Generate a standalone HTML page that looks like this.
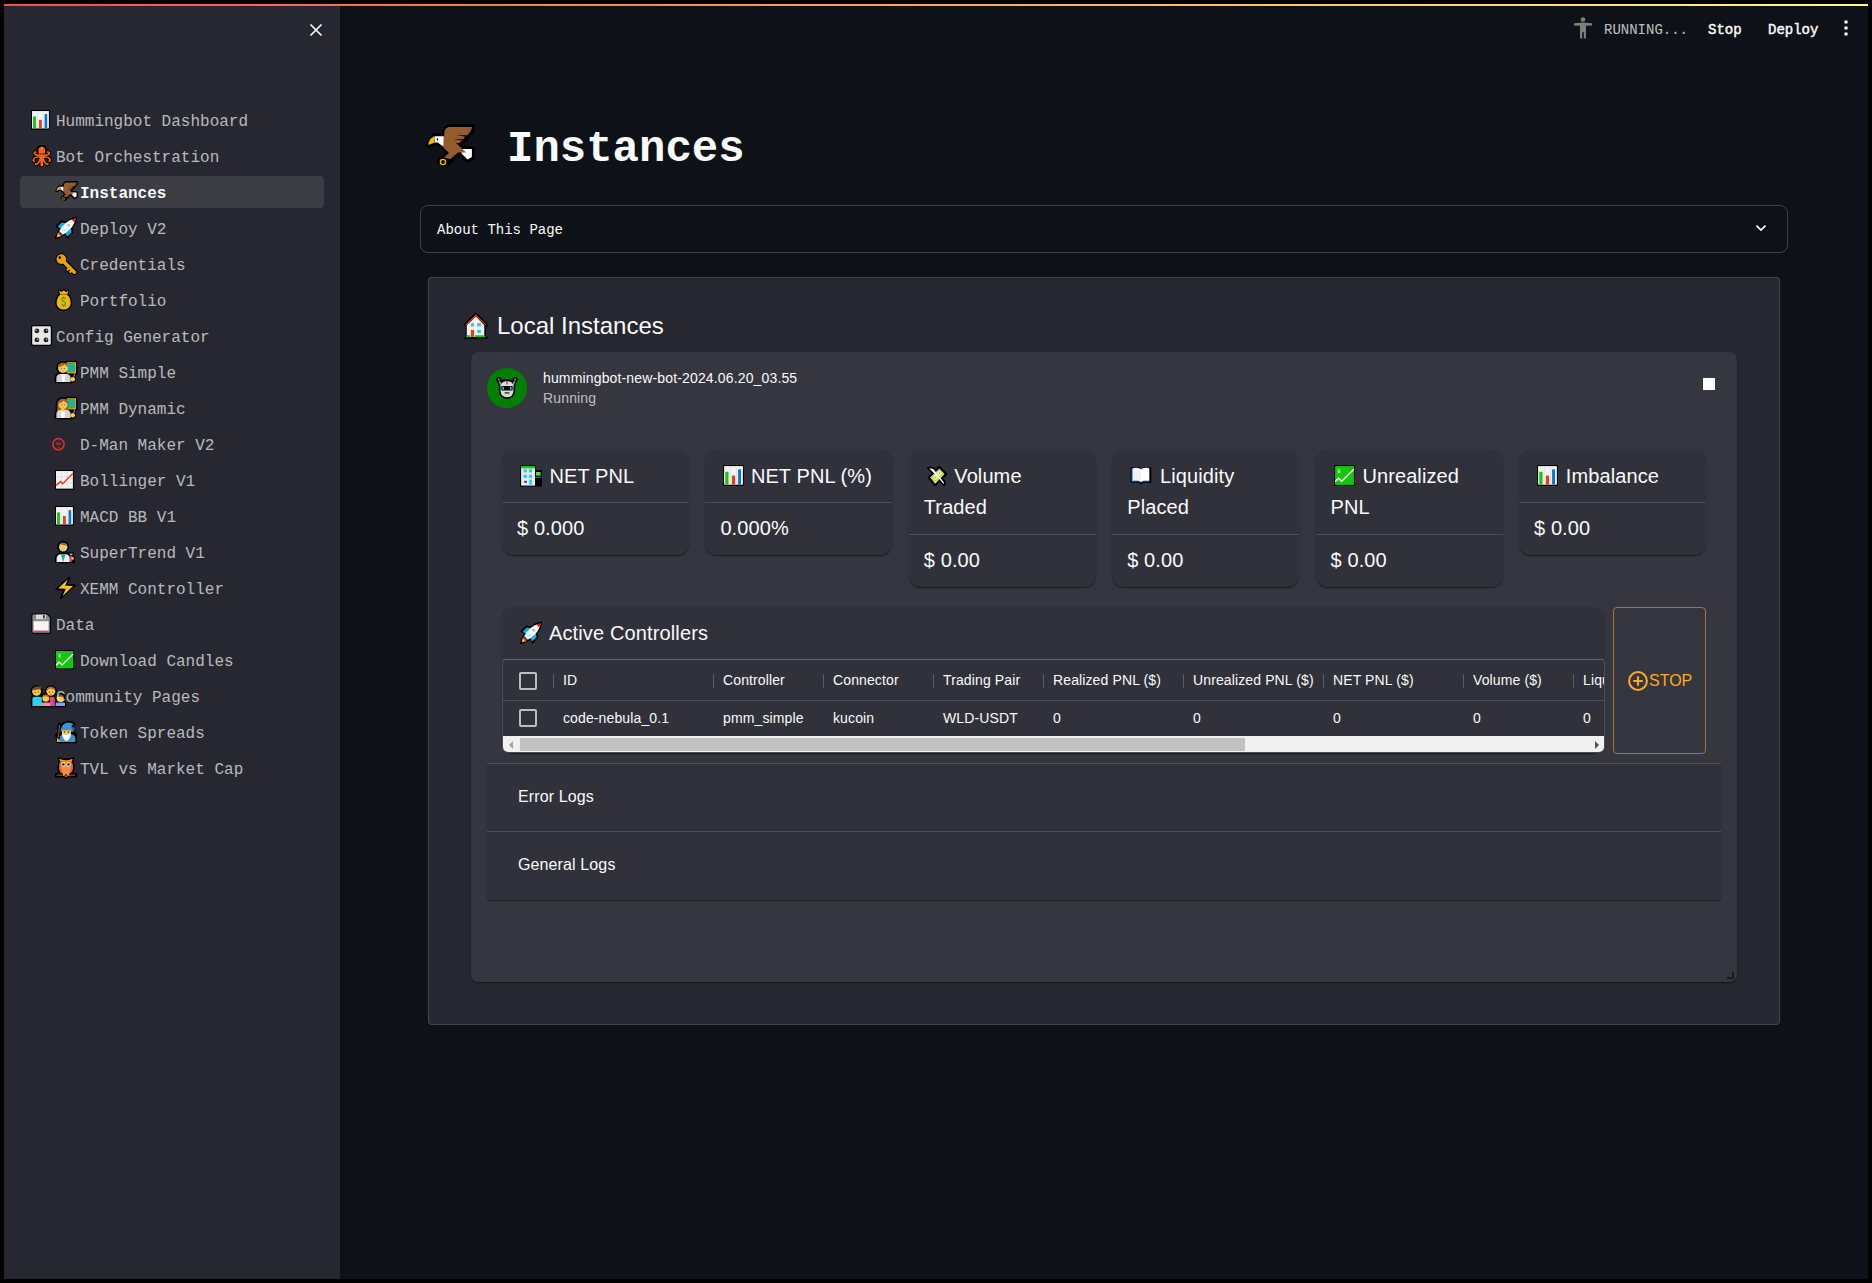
<!DOCTYPE html>
<html><head><meta charset="utf-8">
<style>
*{box-sizing:border-box;margin:0;padding:0}
html,body{width:1872px;height:1283px;background:#000;overflow:hidden}
body{position:relative;font-family:"Liberation Sans",sans-serif;color:#fafafa}
.abs{position:absolute}
.mono{font-family:"Liberation Mono",monospace}
.t{position:absolute;white-space:nowrap}
</style></head><body>

<div class="abs" style="left:4px;top:4px;width:1864px;height:1275px;background:#0e1117"></div>
<div class="abs" style="left:4px;top:6px;width:336px;height:1273px;background:#262730"></div>
<div class="abs" style="left:4px;top:4px;width:1864px;height:2px;background:linear-gradient(90deg,#ff4b4b,#fffd80)"></div>
<svg class="abs" style="left:309px;top:23px" width="14" height="14" viewBox="0 0 14 14"><path d="M1.5 1.5L12.5 12.5M12.5 1.5L1.5 12.5" stroke="#fafafa" stroke-width="1.7"/></svg>
<div class="abs" style="left:20px;top:176px;width:304px;height:32px;border-radius:4px;background:rgba(250,250,250,0.1)"></div>
<svg class="abs" style="left:31px;top:109.5px;overflow:visible" width="19.8" height="20.6" viewBox="0 0 22 22" preserveAspectRatio="none"><rect x="0" y="0" width="21" height="21" rx="1" fill="#000"/><rect x="1.1" y="1.1" width="18.8" height="18.6" fill="#f2f2f2"/><path d="M7.3 1.1v18.6M13.6 1.1v18.6" stroke="#dcdcdc" stroke-width="0.6"/><rect x="2.3" y="6.8" width="3.2" height="12.9" rx="0.8" fill="#16c60c"/><rect x="8.9" y="10.6" width="3.1" height="9.1" fill="#f03a17"/><rect x="15.1" y="4.2" width="2.9" height="15.5" rx="0.8" fill="#0078d7"/></svg>
<div class="t mono" style="left:56px;top:106px;height:32px;line-height:32px;font-size:16px;color:rgba(250,250,250,0.7);font-weight:normal">Hummingbot Dashboard</div>
<svg class="abs" style="left:31px;top:145px;overflow:visible" width="22" height="22" viewBox="0 0 22 22" preserveAspectRatio="none"><g fill="none" stroke="#000" stroke-width="3.4" stroke-linecap="round"><path d="M8.6 10C6 10.6 3.8 10.2 3.3 8.6C3 7.5 3.8 6.7 4.7 7.1M12.9 10C15.5 10.6 17.7 10.2 18.2 8.6C18.5 7.5 17.7 6.7 16.8 7.1M9 11.8C6 11.8 3.2 12.4 2.3 14.8C2 15.9 2.8 16.6 3.5 16.1M12.5 11.8C15.5 11.8 18.3 12.4 19.2 14.8C19.5 15.9 18.7 16.6 18 16.1M9.6 12.8C8.8 15.8 7.6 18.4 5.6 19.4C4.9 19.8 4.3 19.3 4.6 18.7M11.9 12.8C12.7 15.8 13.9 18.4 15.9 19.4C16.6 19.8 17.2 19.3 16.9 18.7M10.2 13V20.4M11.3 13V20.4"/></g><path d="M6.6 5C6.6 2.4 8.4 0.9 10.75 0.9C13.1 0.9 14.9 2.4 14.9 5C14.9 7.6 14 9.4 13.4 11.2V13.4H8.1V11.2C7.5 9.4 6.6 7.6 6.6 5Z" fill="#000" stroke="#000" stroke-width="1.8" stroke-linejoin="round"/><g fill="none" stroke="#f7630c" stroke-width="1.6" stroke-linecap="round"><path d="M8.6 10C6 10.6 3.8 10.2 3.3 8.6C3 7.5 3.8 6.7 4.7 7.1M12.9 10C15.5 10.6 17.7 10.2 18.2 8.6C18.5 7.5 17.7 6.7 16.8 7.1M9 11.8C6 11.8 3.2 12.4 2.3 14.8C2 15.9 2.8 16.6 3.5 16.1M12.5 11.8C15.5 11.8 18.3 12.4 19.2 14.8C19.5 15.9 18.7 16.6 18 16.1M9.6 12.8C8.8 15.8 7.6 18.4 5.6 19.4C4.9 19.8 4.3 19.3 4.6 18.7M11.9 12.8C12.7 15.8 13.9 18.4 15.9 19.4C16.6 19.8 17.2 19.3 16.9 18.7M10.2 13V20.4M11.3 13V20.4"/></g><path d="M7.4 5C7.4 2.9 8.8 1.7 10.75 1.7C12.7 1.7 14.1 2.9 14.1 5C14.1 7.4 13.3 9.2 12.8 11V13H8.7V11C8.2 9.2 7.4 7.4 7.4 5Z" fill="#f7630c"/><circle cx="9.4" cy="8.9" r="0.7" fill="#000"/><circle cx="12.1" cy="8.9" r="0.7" fill="#000"/><circle cx="11.6" cy="3.2" r="0.55" fill="#ffb37a"/><circle cx="10.3" cy="4.4" r="0.4" fill="#ffb37a"/></svg>
<div class="t mono" style="left:56px;top:142px;height:32px;line-height:32px;font-size:16px;color:rgba(250,250,250,0.7);font-weight:normal">Bot Orchestration</div>
<svg class="abs" style="left:55px;top:181px;overflow:visible" width="23" height="21" viewBox="0 0 50 45" preserveAspectRatio="none"><g fill="#000" stroke="#000" stroke-width="6" stroke-linejoin="round" stroke-linecap="round"><path d="M3.6 21L9.7 12H19.3C19.5 6 22 3 26.5 3H47.2C46.5 7 44.6 9.4 42 11.3C41 14 39.5 15.6 37 16.8C36.4 18 35.3 18.8 33.5 19.4L36.6 24.9H46.9V33L42.6 35.6L36.5 29.8L33 28.5L25.5 35.5L22 39.5H18L15 37L19 33.5L24 29L18.8 22.9L12.7 18.4L9.7 18.4Z"/></g><path d="M36.5 24.9H46.9V33L42.6 35.6L36.5 29.5Z" fill="#fff"/><path d="M9.7 12.2H18.8V22.9L12.7 18.4H9.7Z" fill="#fff"/><path d="M9.7 12.2C6 13.3 3.6 16.5 3.4 21L9.7 18.4Z" fill="#f4b400"/><rect x="11.8" y="14.4" width="1.3" height="2" fill="#000"/><path d="M19.3 9.2C19.3 5.4 21.6 3 25.4 3H47.2C46.6 6.2 45 8.6 42.2 11.3H31.5L40 12.5C39.4 14.2 38.6 15 37.2 15.3H28.4L37 16.6C36.2 18 35.4 18.7 33.8 18.9H31L41.1 28.5H33L25.5 35L19 33.5L24 29L18.3 23.4Z" fill="#955a2d"/><circle cx="18" cy="38" r="2.6" fill="none" stroke="#f4b400" stroke-width="1.4"/></svg>
<div class="t mono" style="left:80px;top:178px;height:32px;line-height:32px;font-size:16px;color:#fafafa;font-weight:bold">Instances</div>
<svg class="abs" style="left:55px;top:217px;overflow:visible" width="22" height="22" viewBox="0 0 22 22" preserveAspectRatio="none"><g stroke="#000" stroke-width="2" stroke-linejoin="round"><path d="M21.2 0.8C17 1.3 14 3 11.6 5.4L6.8 4.6L1.6 9.5L5.6 11L4.4 13.2L2 17.5L0.8 21.2L4.5 20L8.8 17.6L11 16.4L12.6 20.4L17.4 15.2L16.6 10.4C19 8 20.7 5 21.2 0.8Z" fill="#000"/></g><path d="M2.6 9.8L6.8 5.5L11.2 6.2L7 12.2Z" fill="#00b4f0"/><path d="M12.2 19.4L16.5 15.2L15.8 10.8L9.8 15Z" fill="#00b4f0"/><path d="M4.2 14.2L7.8 17.8L11.4 15.6L15.2 12C18.2 9 20 5 20.6 1.4C17 2 13 3.8 10 6.8L6.4 10.6Z" fill="#fff"/><path d="M16.2 2.3C18 1.7 19.5 1.4 20.6 1.4C20.4 2.6 20.1 4 19.7 5.8Z" fill="#e81123"/><path d="M4.2 14.2L7.8 17.8L6.2 19.2L2.8 15.8Z" fill="#454f56"/><path d="M2.8 15.8L6.2 19.2L1.5 20.6Z" fill="#ff8c1a"/><circle cx="3.6" cy="18.2" r="1" fill="#ffd23a"/><circle cx="13.8" cy="8.2" r="1.6" fill="#bdbdbd"/><path d="M8 14.4L10.2 12.2" stroke="#35b8ef" stroke-width="0.9"/></svg>
<div class="t mono" style="left:80px;top:214px;height:32px;line-height:32px;font-size:16px;color:rgba(250,250,250,0.7);font-weight:normal">Deploy V2</div>
<svg class="abs" style="left:55px;top:253px;overflow:visible" width="22" height="22" viewBox="0 0 22 22" preserveAspectRatio="none"><path d="M8 8L19.4 19.2" stroke="#000" stroke-width="6" stroke-linecap="round"/><circle cx="6.3" cy="6.1" r="5.9" fill="#000"/><path d="M13.6 15.6L12.2 17M16.2 18L14.9 19.3" stroke="#000" stroke-width="4.4" stroke-linecap="round"/><circle cx="6.3" cy="6.1" r="4.8" fill="#e8a400"/><path d="M8 8L19.4 19.2" stroke="#e8a400" stroke-width="3.6" stroke-linecap="round"/><path d="M13.6 15.6L12.6 16.6M16.2 18L15.3 18.9" stroke="#e8a400" stroke-width="2.2" stroke-linecap="round"/><circle cx="4.8" cy="4.6" r="1.3" fill="#000"/></svg>
<div class="t mono" style="left:80px;top:250px;height:32px;line-height:32px;font-size:16px;color:rgba(250,250,250,0.7);font-weight:normal">Credentials</div>
<svg class="abs" style="left:54.5px;top:289px;overflow:visible" width="18.5" height="22" viewBox="0 0 22 22" preserveAspectRatio="none"><g fill="#000" stroke="#000" stroke-width="2" stroke-linejoin="round"><path d="M4.8 0.8L7.5 2.4L10.5 0.8L13.2 2.4L15.8 0.8L14.8 5.2C18 7.2 19.3 10.3 19.3 13.7C19.3 18.6 15.5 21.2 10.3 21.2C5.1 21.2 1.3 18.6 1.3 13.7C1.3 10.3 2.6 7.2 5.8 5.2Z"/></g><path d="M5 1.6L7.5 3L10.3 1.6L13.1 3L15.6 1.6L14.6 5.2H6Z" fill="#f4b400"/><rect x="6" y="4.8" width="8.6" height="1.1" fill="#b06a20"/><path d="M6 5.9H14.6C17.4 7.7 18.6 10.5 18.6 13.7C18.6 18 15.2 20.5 10.3 20.5C5.4 20.5 2 18 2 13.7C2 10.5 3.2 7.7 6 5.9Z" fill="#f4b400"/><path d="M12.4 10.2C12 9.2 11.2 8.8 10.3 8.8C9 8.8 8.2 9.6 8.2 10.6C8.2 12.8 12.6 12.2 12.6 14.6C12.6 15.7 11.6 16.5 10.3 16.5C9.2 16.5 8.3 15.9 8 14.9M10.3 7.3V8.8M10.3 16.5V18" stroke="#16a60c" stroke-width="1.3" fill="none"/></svg>
<div class="t mono" style="left:80px;top:286px;height:32px;line-height:32px;font-size:16px;color:rgba(250,250,250,0.7);font-weight:normal">Portfolio</div>
<svg class="abs" style="left:31px;top:325px;overflow:visible" width="22" height="22" viewBox="0 0 22 22" preserveAspectRatio="none"><rect x="0" y="0" width="21" height="21" rx="2.2" fill="#000"/><rect x="1.2" y="1.2" width="18.6" height="18.6" rx="1.2" fill="#e8e8e8"/><g fill="#222"><circle cx="5.9" cy="5.9" r="2.4"/><circle cx="15" cy="5.9" r="2.4"/><circle cx="5.9" cy="14.9" r="2.4"/><circle cx="15" cy="14.9" r="2.4"/></g><g fill="#ddd"><circle cx="5.2" cy="5.2" r="0.7"/><circle cx="15.7" cy="5.2" r="0.7"/><circle cx="6.6" cy="14.2" r="0.7"/><circle cx="15.7" cy="14.2" r="0.7"/></g></svg>
<div class="t mono" style="left:56px;top:322px;height:32px;line-height:32px;font-size:16px;color:rgba(250,250,250,0.7);font-weight:normal">Config Generator</div>
<svg class="abs" style="left:55px;top:361px;overflow:visible" width="22" height="22" viewBox="0 0 22 22" preserveAspectRatio="none"><g fill="#000" stroke="#000" stroke-width="1.8" stroke-linejoin="round"><rect x="11" y="0.6" width="10.6" height="12.4"/><circle cx="8" cy="6.9" r="5.9"/><path d="M0.6 21.3V17C0.6 14 2.8 12.2 5.6 12.2H11.6C13.8 12.2 15.6 13.2 16.2 14.6H17.8C19.8 14.8 20.6 16.4 20.4 18C20.2 20 18.8 21.3 16.8 21.3Z"/></g><rect x="11.6" y="1.2" width="9.4" height="11.2" fill="#e8a400"/><rect x="12.2" y="1.8" width="7.8" height="9.4" fill="#18b49a"/><path d="M19.4 12.4L18.9 16" stroke="#bbb" stroke-width="0.8"/><path d="M1.4 21V17C1.4 14.6 3.2 13 5.6 13H11.4C13.8 13 15.6 14.6 15.6 17V21Z" fill="#d4d4d4"/><path d="M6.4 13H10.6L9.9 21H7.1Z" fill="#fff"/><circle cx="8" cy="6.9" r="5" fill="#ffc83d"/><path d="M3 6.4C2.9 3.6 5 1.8 8 1.8C11 1.8 13.1 3.6 13 6.6C12 5.8 11 4.6 10.2 3.6C8.6 4.8 5.6 5.8 3 6.4Z" fill="#a0632c"/><circle cx="6.2" cy="7.8" r="1" fill="#8fd0f5"/><circle cx="9.8" cy="7.8" r="1" fill="#8fd0f5"/><circle cx="6.2" cy="7.3" r="0.45" fill="#222"/><circle cx="9.8" cy="7.3" r="0.45" fill="#222"/><rect x="7.2" y="9.9" width="1.6" height="0.7" fill="#e8906a"/><circle cx="17.8" cy="18.2" r="2.3" fill="#ffc83d"/></svg>
<div class="t mono" style="left:80px;top:358px;height:32px;line-height:32px;font-size:16px;color:rgba(250,250,250,0.7);font-weight:normal">PMM Simple</div>
<svg class="abs" style="left:55px;top:397px;overflow:visible" width="22" height="22" viewBox="0 0 22 22" preserveAspectRatio="none"><g fill="#000" stroke="#000" stroke-width="1.8" stroke-linejoin="round"><rect x="11" y="0.6" width="10.6" height="12.4"/><path d="M1.6 15.5V7C1.6 3.2 4.4 0.9 8 0.9C11.6 0.9 14.4 3.2 14.4 7V15.5Z"/><path d="M0.6 21.3V17C0.6 14 2.8 12.2 5.6 12.2H11.6C13.8 12.2 15.6 13.2 16.2 14.6H17.8C19.8 14.8 20.6 16.4 20.4 18C20.2 20 18.8 21.3 16.8 21.3Z"/></g><rect x="11.6" y="1.2" width="9.4" height="11.2" fill="#e8a400"/><rect x="12.2" y="1.8" width="7.8" height="9.4" fill="#18b49a"/><path d="M19.4 12.4L18.9 16" stroke="#bbb" stroke-width="0.8"/><path d="M2.4 15V7C2.4 3.8 4.8 1.7 8 1.7C11.2 1.7 13.6 3.8 13.6 7V15Z" fill="#a0632c"/><path d="M1.4 21V17C1.4 14.6 3.2 13 5.6 13H11.4C13.8 13 15.6 14.6 15.6 17V21Z" fill="#d4d4d4"/><path d="M6.2 13H9.8L9.6 21H6.4Z" fill="#fff"/><rect x="6.4" y="11.6" width="3.2" height="3" fill="#ffc83d"/><circle cx="8" cy="7.6" r="4.4" fill="#ffc83d"/><path d="M3.6 6.6C5.4 6.2 7.6 4.8 8.8 3.4C9.6 4.8 11 5.8 12.4 6.2C12.2 3.8 10.4 2.4 8 2.4C5.6 2.4 3.8 4 3.6 6.6Z" fill="#a0632c"/><circle cx="6.3" cy="8.2" r="1" fill="#8fd0f5"/><circle cx="9.7" cy="8.2" r="1" fill="#8fd0f5"/><circle cx="6.3" cy="7.7" r="0.45" fill="#222"/><circle cx="9.7" cy="7.7" r="0.45" fill="#222"/><rect x="7.2" y="10.2" width="1.6" height="0.7" fill="#e8906a"/><circle cx="17.8" cy="18.2" r="2.3" fill="#ffc83d"/></svg>
<div class="t mono" style="left:80px;top:394px;height:32px;line-height:32px;font-size:16px;color:rgba(250,250,250,0.7);font-weight:normal">PMM Dynamic</div>
<svg class="abs" style="left:52px;top:438px;overflow:visible" width="22" height="22" viewBox="0 0 22 22" preserveAspectRatio="none"><circle cx="6.5" cy="6.2" r="5.6" fill="none" stroke="#e62a2a" stroke-width="1.6"/><path d="M3.8 5.6L5.2 4.2L6.2 5.8M7 5.8L8 4.2L9.3 5.6M4.2 6.2L9 6.2M5.8 9.2H7.3" stroke="#e62a2a" stroke-width="0.9" fill="none"/></svg>
<div class="t mono" style="left:80px;top:430px;height:32px;line-height:32px;font-size:16px;color:rgba(250,250,250,0.7);font-weight:normal">D-Man Maker V2</div>
<svg class="abs" style="left:55px;top:469.8px;overflow:visible" width="19.8" height="20.6" viewBox="0 0 22 22" preserveAspectRatio="none"><rect x="0" y="0" width="21" height="21" rx="1" fill="#000"/><rect x="1.1" y="1.1" width="18.8" height="18.8" fill="#f2f2f2"/><path d="M7.3 1.1v18.8M13.6 1.1v18.8M1.1 7.3h18.8M1.1 13.6h18.8" stroke="#d6d6d6" stroke-width="0.6"/><path d="M1.2 16.5L6.3 12.4L8.6 14.6L19.8 3.8" stroke="#f03a17" stroke-width="1.6" fill="none"/></svg>
<div class="t mono" style="left:80px;top:466px;height:32px;line-height:32px;font-size:16px;color:rgba(250,250,250,0.7);font-weight:normal">Bollinger V1</div>
<svg class="abs" style="left:55px;top:505.5px;overflow:visible" width="19.8" height="20.6" viewBox="0 0 22 22" preserveAspectRatio="none"><rect x="0" y="0" width="21" height="21" rx="1" fill="#000"/><rect x="1.1" y="1.1" width="18.8" height="18.6" fill="#f2f2f2"/><path d="M7.3 1.1v18.6M13.6 1.1v18.6" stroke="#dcdcdc" stroke-width="0.6"/><rect x="2.3" y="6.8" width="3.2" height="12.9" rx="0.8" fill="#16c60c"/><rect x="8.9" y="10.6" width="3.1" height="9.1" fill="#f03a17"/><rect x="15.1" y="4.2" width="2.9" height="15.5" rx="0.8" fill="#0078d7"/></svg>
<div class="t mono" style="left:80px;top:502px;height:32px;line-height:32px;font-size:16px;color:rgba(250,250,250,0.7);font-weight:normal">MACD BB V1</div>
<svg class="abs" style="left:55px;top:541px;overflow:visible" width="22" height="22" viewBox="0 0 22 22" preserveAspectRatio="none"><g fill="#000" stroke="#000" stroke-width="2" stroke-linejoin="round"><circle cx="8.2" cy="5.8" r="5"/><path d="M0.8 21.2V17.5C0.8 14.5 3 12.6 6 12.6H10.5C12.5 12.6 14 13.4 14.6 14.4V12.2H17.4V15C18.2 15.6 18.8 16.5 18.8 17.6V21.2Z"/></g><path d="M1.6 21V17.5C1.6 15 3.4 13.3 6 13.3H10.4C13 13.3 14.8 15 14.8 17.5V21Z" fill="#eee"/><path d="M5.8 13.3H10.6L8.2 21Z" fill="#18b49a"/><circle cx="8.2" cy="6.2" r="4.2" fill="#ffc83d"/><path d="M3.9 5.4C4 2.8 5.8 1.4 8.2 1.4C10.6 1.4 12.4 2.8 12.5 5.2L11.5 4.2C10 4.4 7.2 4 5.5 3Z" fill="#a0632c"/><rect x="4.9" y="5.9" width="2.9" height="2.1" rx="0.8" fill="#9dd6f5"/><rect x="8.6" y="5.9" width="2.9" height="2.1" rx="0.8" fill="#9dd6f5"/><circle cx="8.2" cy="9.4" r="0.6" fill="#e8a060"/><rect x="14.9" y="14.5" width="2.4" height="6.2" rx="0.8" fill="#e8306e"/><rect x="14.7" y="12.6" width="2.8" height="1.2" fill="#aee2f5"/><circle cx="17.6" cy="17.4" r="1.3" fill="#ffc83d"/></svg>
<div class="t mono" style="left:80px;top:538px;height:32px;line-height:32px;font-size:16px;color:rgba(250,250,250,0.7);font-weight:normal">SuperTrend V1</div>
<svg class="abs" style="left:55px;top:577px;overflow:visible" width="22" height="22" viewBox="0 0 22 22" preserveAspectRatio="none"><path d="M13.8 0.8L1.2 12.4L9.2 12.6L5.6 21.2L19.8 8L11.6 7.8L14.6 0.8Z" fill="#000" stroke="#000" stroke-width="1.8" stroke-linejoin="round"/><path d="M12.6 2.6L3.2 11.5L10.8 11.7L7.6 19.2L18 9L10.2 8.8Z" fill="#f7c325"/></svg>
<div class="t mono" style="left:80px;top:574px;height:32px;line-height:32px;font-size:16px;color:rgba(250,250,250,0.7);font-weight:normal">XEMM Controller</div>
<svg class="abs" style="left:31px;top:613px;overflow:visible" width="22" height="22" viewBox="0 0 22 22" preserveAspectRatio="none"><path d="M0.4 2.6C0.4 1.4 1.2 0.6 2.4 0.6H16.4L19.8 4V19C19.8 20 19.1 20.7 18 20.7H2.4C1.2 20.7 0.4 20 0.4 19Z" fill="#000"/><path d="M1.4 2.8C1.4 2 2 1.6 2.6 1.6H16L18.8 4.4V18.8C18.8 19.4 18.4 19.7 17.8 19.7H2.6C2 19.7 1.4 19.4 1.4 18.8Z" fill="#8a8a8a"/><rect x="5" y="1.6" width="10" height="4.6" fill="#d9d9d9"/><rect x="12" y="2.2" width="1.8" height="3.2" fill="#333"/><rect x="2.6" y="8.2" width="15" height="10.4" fill="#f5f5f5"/><rect x="2.6" y="17.6" width="15" height="1.2" fill="#e81d62"/></svg>
<div class="t mono" style="left:56px;top:610px;height:32px;line-height:32px;font-size:16px;color:rgba(250,250,250,0.7);font-weight:normal">Data</div>
<svg class="abs" style="left:55px;top:649.8px;overflow:visible" width="20.2" height="20.2" viewBox="0 0 22 22" preserveAspectRatio="none"><rect x="0" y="0" width="21" height="21" rx="1" fill="#000"/><rect x="1.1" y="1.1" width="18.8" height="18.8" fill="#16c60c"/><path d="M1.2 16.6L4.6 13.2L7.7 16.2L19.8 4.3" stroke="#fff" stroke-width="1.4" fill="none"/><path d="M3.4 3.8L5 5.6L6.6 3.8M5 5.6v2.6M3.7 6.5h2.6M3.7 7.6h2.6" stroke="#b9ecb3" stroke-width="0.9" fill="none"/></svg>
<div class="t mono" style="left:80px;top:646px;height:32px;line-height:32px;font-size:16px;color:rgba(250,250,250,0.7);font-weight:normal">Download Candles</div>
<svg class="abs" style="left:31px;top:685px;overflow:visible" width="34" height="22" viewBox="0 0 34 22" preserveAspectRatio="none"><g fill="#000" stroke="#000" stroke-width="1.7" stroke-linejoin="round"><circle cx="5.6" cy="6.2" r="5.2"/><circle cx="19.9" cy="6.2" r="5.2"/><path d="M0.6 21.4V14C0.6 12 2 11 4 11H9.4C11 11 11.6 12 11.6 13.6V21.4Z"/><path d="M18 21.4V13C18 11.6 19 11 20 11H21.6C23 11 24.6 12 24.6 13.6V21.4Z"/><circle cx="14.8" cy="13" r="4.3"/><path d="M9.2 21.4V19C9.2 17.6 10.4 16.8 12 16.8H17.4C19 16.8 20.2 17.6 20.2 19V21.4Z"/><circle cx="29.2" cy="13" r="4.3"/><path d="M23.8 21.4V19C23.8 17.6 25 16.8 26.6 16.8H32.2C33.6 16.8 34.6 17.6 34.6 19V21.4Z"/></g><path d="M1.4 21V14C1.4 12.6 2.4 11.8 4 11.8H9.2C10.4 11.8 10.8 12.6 10.8 13.8V21Z" fill="#2ad0f5"/><path d="M18.8 21V13.2C18.8 12.2 19.4 11.8 20.2 11.8H21.6C22.8 11.8 23.8 12.6 23.8 13.8V21Z" fill="#e8448e"/><circle cx="5.6" cy="6.3" r="4.4" fill="#ffc83d"/><path d="M1.2 5.4C1.4 2.6 3.4 1.4 5.8 1.4H10.4L9.8 4.4C7 4.4 4 4.6 1.2 5.4Z" fill="#7a4a28"/><circle cx="19.9" cy="6.3" r="4.4" fill="#ffc83d"/><path d="M15.5 6C15.5 3 17.4 1.4 19.9 1.4C22.4 1.4 24.3 3 24.3 6C23 4.6 21.6 3.8 19.9 3.6C18.2 3.8 16.8 4.6 15.5 6Z" fill="#a0632c"/><circle cx="4.1" cy="7" r="0.6" fill="#222"/><circle cx="7.3" cy="7" r="0.6" fill="#222"/><circle cx="18.4" cy="7" r="0.6" fill="#222"/><circle cx="21.6" cy="7" r="0.6" fill="#222"/><rect x="19" y="9" width="1.8" height="0.7" fill="#e8401c"/><path d="M10 21V19C10 18 10.8 17.6 12 17.6H17.4C18.6 17.6 19.4 18 19.4 19V21Z" fill="#f08bc0"/><circle cx="14.8" cy="13.2" r="3.5" fill="#ffc83d"/><path d="M11.3 12.6C11.6 10.6 13 9.6 14.8 9.6C16.6 9.6 18 10.6 18.3 12.8C17 11.8 15.6 11.2 14.2 11.2C13.2 11.4 12.2 11.8 11.3 12.6Z" fill="#a0632c"/><path d="M11.6 10.2L13.6 11L12.2 12Z" fill="#f08bc0"/><path d="M24.6 21V19C24.6 18 25.4 17.6 26.6 17.6H32.2C33.4 17.6 34 18 34 19V21Z" fill="#7aa7f5"/><circle cx="29.2" cy="13.2" r="3.5" fill="#ffc83d"/><path d="M25.7 12.6C25.9 10.6 27.4 9.6 29.2 9.6C31 9.6 32.5 10.6 32.7 12.6C31.4 11.8 30.2 11.4 29.2 11.4C28.2 11.4 27 11.8 25.7 12.6Z" fill="#7a4a28"/></svg>
<div class="t mono" style="left:56px;top:682px;height:32px;line-height:32px;font-size:16px;color:rgba(250,250,250,0.7);font-weight:normal">Community Pages</div>
<svg class="abs" style="left:55px;top:721px;overflow:visible" width="22" height="22" viewBox="0 0 22 22" preserveAspectRatio="none"><g fill="#000" stroke="#000" stroke-width="2" stroke-linejoin="round"><path d="M4.6 9.8C4.6 5 7.4 1.4 12 0.9C15.5 0.6 18.5 1.5 19.8 3.5C18 3.4 17 3.8 17 4.6L19 10.2V11L21 14V21.2H3.2L2 21V17.5L1 14L3 12L3.5 3.5L5 3Z"/></g><path d="M2.5 16C3 17.5 4 18.8 5.2 19.5V21H1.8Z" fill="#f4b400"/><path d="M4.4 3.8L3.6 16" stroke="#8a5a30" stroke-width="1.1"/><path d="M4.6 21V17.4C4.6 15 6.4 13.6 9 13.6H15.8C18.4 13.6 20.4 15 20.4 17.4V21Z" fill="#3c92d8"/><path d="M5.6 10.6C6 5.8 8.4 2.3 12.2 1.8C14.8 1.5 17.2 2 18.8 3.4C17.6 3.4 16.5 4.2 16.6 5.4C17.4 7.2 18.4 9 18.8 10.8Z" fill="#3c92d8"/><path d="M16 5C17 5.8 18.6 6.5 19.5 7.2C19.5 8.8 18.8 10 18.2 10.4Z" fill="#2a6fb0"/><rect x="7" y="9.4" width="9" height="4.2" fill="#ffc83d"/><circle cx="9.5" cy="11" r="0.8" fill="#333"/><circle cx="13.5" cy="11" r="0.8" fill="#333"/><path d="M7 12.4C8 13 9.6 13.4 11.5 13.4C13.4 13.4 15 13 16 12.4C16 15.8 14.2 18.6 11.5 20.2C8.8 18.6 7 15.8 7 12.4Z" fill="#fff"/></svg>
<div class="t mono" style="left:80px;top:718px;height:32px;line-height:32px;font-size:16px;color:rgba(250,250,250,0.7);font-weight:normal">Token Spreads</div>
<svg class="abs" style="left:55px;top:757px;overflow:visible" width="22" height="22" viewBox="0 0 22 22" preserveAspectRatio="none"><g fill="#000" stroke="#000" stroke-width="1.8" stroke-linejoin="round"><path d="M3.6 1.2L7.5 2.2H14.5L18.4 1.2L17.6 5C18.6 6.6 18.8 8.5 18.8 10.5C18.8 13.5 17.8 15.6 16.4 16.8H21.2V19.6H13.4L12.2 20.8H9.8L8.6 19.6H0.8V16.8H5.6C4.2 15.6 3.2 13.5 3.2 10.5C3.2 8.5 3.4 6.6 4.4 5Z"/></g><path d="M4.6 2L7.6 3H14.4L17.4 2L16.8 5.2C17.8 6.6 18 8.4 18 10.5C18 14.6 15.4 17.6 11 17.6C6.6 17.6 4 14.6 4 10.5C4 8.4 4.2 6.6 5.2 5.2Z" fill="#e2621e"/><path d="M6 10.2C6 15 8 17 11 17C14 17 16 15 16 10.2C14.6 9.2 12.8 8.8 11 8.8C9.2 8.8 7.4 9.2 6 10.2Z" fill="#f48a4a"/><path d="M4.6 2L10 3.8L11 5L12 3.8L17.4 2L17.2 3.4L12 4.8L11 6.2L10 4.8L4.8 3.4Z" fill="#f4b400"/><circle cx="8.4" cy="7.4" r="2.3" fill="#fde8dc"/><circle cx="13.6" cy="7.4" r="2.3" fill="#fde8dc"/><circle cx="8.4" cy="7.4" r="1.2" fill="#000"/><circle cx="13.6" cy="7.4" r="1.2" fill="#000"/><path d="M10.2 8.4L11 11L11.8 8.4Z" fill="#f4b400"/><rect x="1.6" y="17.4" width="18.8" height="1.6" fill="#6b3a28"/><rect x="8" y="16.6" width="1.8" height="2" fill="#f4b400"/><rect x="12.2" y="16.6" width="1.8" height="2" fill="#f4b400"/><path d="M9.6 19H12.4L11.8 20H10.2Z" fill="#e2621e"/></svg>
<div class="t mono" style="left:80px;top:754px;height:32px;line-height:32px;font-size:16px;color:rgba(250,250,250,0.7);font-weight:normal">TVL vs Market Cap</div>
<svg class="abs" style="left:1573px;top:17px" width="20" height="22" viewBox="0 0 20 22"><circle cx="10" cy="2.5" r="2.3" fill="#7d7d7d"/><path d="M1 6.2L10 5.6L19 6.2V8.4L13 8.8V21.6H10.8V15.2H9.2V21.6H7V8.8L1 8.4Z" fill="#7d7d7d"/></svg>
<div class="t mono" style="left:1604px;top:20px;font-size:14px;line-height:20px;color:rgba(250,250,250,0.75)">RUNNING...</div>
<div class="t mono" style="left:1708px;top:20px;font-size:14px;line-height:20px;color:#fafafa;-webkit-text-stroke:0.45px #fafafa">Stop</div>
<div class="t mono" style="left:1768px;top:20px;font-size:14px;line-height:20px;color:#fafafa;-webkit-text-stroke:0.45px #fafafa">Deploy</div>
<svg class="abs" style="left:1843px;top:20px" width="6" height="16" viewBox="0 0 6 16"><circle cx="3" cy="2" r="1.8" fill="#fafafa"/><circle cx="3" cy="8" r="1.8" fill="#fafafa"/><circle cx="3" cy="14" r="1.8" fill="#fafafa"/></svg>
<svg class="abs" style="left:425px;top:124px;overflow:visible" width="50" height="45" viewBox="0 0 50 45" preserveAspectRatio="none"><g fill="#000" stroke="#000" stroke-width="6" stroke-linejoin="round" stroke-linecap="round"><path d="M3.6 21L9.7 12H19.3C19.5 6 22 3 26.5 3H47.2C46.5 7 44.6 9.4 42 11.3C41 14 39.5 15.6 37 16.8C36.4 18 35.3 18.8 33.5 19.4L36.6 24.9H46.9V33L42.6 35.6L36.5 29.8L33 28.5L25.5 35.5L22 39.5H18L15 37L19 33.5L24 29L18.8 22.9L12.7 18.4L9.7 18.4Z"/></g><path d="M36.5 24.9H46.9V33L42.6 35.6L36.5 29.5Z" fill="#fff"/><path d="M9.7 12.2H18.8V22.9L12.7 18.4H9.7Z" fill="#fff"/><path d="M9.7 12.2C6 13.3 3.6 16.5 3.4 21L9.7 18.4Z" fill="#f4b400"/><rect x="11.8" y="14.4" width="1.3" height="2" fill="#000"/><path d="M19.3 9.2C19.3 5.4 21.6 3 25.4 3H47.2C46.6 6.2 45 8.6 42.2 11.3H31.5L40 12.5C39.4 14.2 38.6 15 37.2 15.3H28.4L37 16.6C36.2 18 35.4 18.7 33.8 18.9H31L41.1 28.5H33L25.5 35L19 33.5L24 29L18.3 23.4Z" fill="#955a2d"/><circle cx="18" cy="38" r="2.6" fill="none" stroke="#f4b400" stroke-width="1.4"/></svg>
<div class="t mono" style="left:507px;top:121px;font-size:44px;line-height:56px;font-weight:bold;color:#fafafa">Instances</div>
<div class="abs" style="left:420px;top:205px;width:1368px;height:48px;border:1px solid rgba(250,250,250,0.2);border-radius:8px"></div>
<div class="t mono" style="left:437px;top:220px;font-size:14px;line-height:20px;color:#fafafa">About This Page</div>
<svg class="abs" style="left:1754px;top:222px" width="14" height="10" viewBox="0 0 14 10"><path d="M2.5 3.6L7 8L11.5 3.6" stroke="#fafafa" stroke-width="1.7" fill="none"/></svg>
<div class="abs" style="left:428px;top:277px;width:1352px;height:748px;background:#262730;border:1px solid rgba(250,250,250,0.14);border-radius:4px"></div>
<svg class="abs" style="left:464px;top:312px;overflow:visible" width="24" height="27" viewBox="0 0 24 27" preserveAspectRatio="none"><path d="M11.8 0.6L23.4 12V14H21.4V24.4L23.4 25V26.6H0.4V25L2.2 24.4V14H0.2V12Z" fill="#000" stroke="#000" stroke-width="0.8" stroke-linejoin="round"/><path d="M2.8 13.2L11.8 4.4L20.3 13.2V25.1H2.8Z" fill="#f2f2f2"/><path d="M1.9 12.9L11.7 3.3L21.9 12.9" stroke="#e8401c" stroke-width="1.1" fill="none"/><rect x="6.9" y="11.1" width="3.1" height="3.4" fill="#2dc7f3"/><rect x="13.3" y="11.1" width="3.6" height="3.4" fill="#2dc7f3"/><rect x="13.3" y="17.9" width="3.6" height="3.2" fill="#2dc7f3"/><rect x="6.9" y="17.9" width="3.1" height="7" fill="#f03a17"/><path d="M1.6 25.2L2.8 23.6V23.2H6.2V25.2ZM10.8 25.2V23.2H20.3V23.6L22 25.2Z" fill="#16c60c"/></svg>
<div class="t" style="left:497px;top:312px;font-size:24px;line-height:28px;color:#fafafa">Local Instances</div>
<div class="abs" style="left:471px;top:352px;width:1266px;height:630px;background:#363640;border-radius:8px;box-shadow:0 2px 1px -1px rgba(0,0,0,.2),0 1px 1px 0 rgba(0,0,0,.14),0 1px 3px 0 rgba(0,0,0,.12)"></div>
<div class="abs" style="left:487px;top:368px;width:40px;height:40px;border-radius:50%;background:#008000"></div>
<svg class="abs" style="left:496px;top:377px;overflow:visible" width="22" height="22" viewBox="0 0 22 22" preserveAspectRatio="none"><g fill="#000" stroke="#000" stroke-width="1.8" stroke-linejoin="round"><circle cx="2.8" cy="2.5" r="1.7"/><circle cx="19.2" cy="2.5" r="1.7"/><path d="M2 3L3.8 9V14C3.8 18.5 7 21 11 21C15 21 18.2 18.5 18.2 14V9L20 3L17.4 4.4C15.8 3.6 13.4 3.2 11 3.2C8.6 3.2 6.2 3.6 4.6 4.4Z"/></g><path d="M2.6 3.2L4.6 10L5.2 5.6ZM19.4 3.2L17.4 10L16.8 5.6Z" fill="#a6a6a6"/><circle cx="2.8" cy="2.5" r="0.9" fill="#a6a6a6"/><circle cx="19.2" cy="2.5" r="0.9" fill="#a6a6a6"/><path d="M4.6 9.5C4.6 6 7.2 4.2 11 4.2C14.8 4.2 17.4 6 17.4 9.5V14C17.4 17.8 14.6 20.2 11 20.2C7.4 20.2 4.6 17.8 4.6 14Z" fill="#dcdcdc"/><rect x="10.2" y="4.3" width="1.6" height="3.2" fill="#e8401c"/><rect x="5.3" y="9" width="11.4" height="4.4" rx="0.8" fill="#000"/><rect x="6.4" y="9.8" width="1.7" height="2.8" fill="#2dc7f3"/><rect x="13.9" y="9.8" width="1.7" height="2.8" fill="#2dc7f3"/><rect x="8.6" y="15.4" width="4.8" height="1.1" fill="#000"/></svg>
<div class="t" style="left:543px;top:369px;font-size:14px;line-height:18px;letter-spacing:0.15px;color:#fafafa">hummingbot-new-bot-2024.06.20_03.55</div>
<div class="t" style="left:543px;top:389px;font-size:14px;line-height:18px;letter-spacing:0.15px;color:rgba(250,250,250,0.7)">Running</div>
<div class="abs" style="left:1703px;top:378px;width:12px;height:12px;background:#fff"></div>
<div class="abs" style="left:502.0px;top:450px;width:187px;height:105px;background:#31313b;border-radius:12px;box-shadow:0 2px 1px -1px rgba(0,0,0,.3),0 1px 1px 0 rgba(0,0,0,.2),0 1px 3px 0 rgba(0,0,0,.15)"></div>
<div class="abs" style="left:502.0px;top:502px;width:187px;height:1px;background:rgba(250,250,250,0.15)"></div>
<svg class="abs" style="left:520px;top:465px;overflow:visible" width="22" height="22" viewBox="0 0 22 22" preserveAspectRatio="none"><rect x="0" y="0" width="16" height="21.6" fill="#000"/><rect x="15" y="5.2" width="7" height="16.4" fill="#000"/><rect x="1.1" y="1" width="13.9" height="19.6" fill="#eaeaea"/><rect x="1.1" y="1" width="13.9" height="2.4" fill="#16c60c"/><rect x="3.6" y="4.2" width="3.2" height="3.2" fill="#1ad1f5"/><rect x="8.9" y="4.2" width="3.2" height="3.2" fill="#1ad1f5"/><rect x="3.6" y="9.7" width="3.2" height="3.2" fill="#1ad1f5"/><rect x="8.9" y="9.7" width="3.2" height="3.2" fill="#1ad1f5"/><rect x="9.2" y="14.5" width="2.8" height="6.1" fill="#2ad4f7"/><rect x="4.2" y="15.8" width="2.6" height="2" fill="#1636d4"/><rect x="16" y="7" width="4.6" height="3.6" fill="#4fd94f"/><rect x="15" y="11.7" width="6.2" height="1.2" fill="#0a9a0a"/></svg>
<div class="t" style="left:549.5px;top:460px;font-size:20px;line-height:32px;letter-spacing:0.1px;color:#fafafa">NET PNL</div>
<div class="t" style="left:517.0px;top:512px;font-size:20px;line-height:32px;letter-spacing:0.1px;color:#fafafa">$ 0.000</div>
<div class="abs" style="left:705.4px;top:450px;width:187px;height:105px;background:#31313b;border-radius:12px;box-shadow:0 2px 1px -1px rgba(0,0,0,.3),0 1px 1px 0 rgba(0,0,0,.2),0 1px 3px 0 rgba(0,0,0,.15)"></div>
<div class="abs" style="left:705.4px;top:502px;width:187px;height:1px;background:rgba(250,250,250,0.15)"></div>
<svg class="abs" style="left:723px;top:465px;overflow:visible" width="22" height="22" viewBox="0 0 22 22" preserveAspectRatio="none"><rect x="0" y="0" width="21" height="21" rx="1" fill="#000"/><rect x="1.1" y="1.1" width="18.8" height="18.6" fill="#f2f2f2"/><path d="M7.3 1.1v18.6M13.6 1.1v18.6" stroke="#dcdcdc" stroke-width="0.6"/><rect x="2.3" y="6.8" width="3.2" height="12.9" rx="0.8" fill="#16c60c"/><rect x="8.9" y="10.6" width="3.1" height="9.1" fill="#f03a17"/><rect x="15.1" y="4.2" width="2.9" height="15.5" rx="0.8" fill="#0078d7"/></svg>
<div class="t" style="left:750.9px;top:460px;font-size:20px;line-height:32px;letter-spacing:0.1px;color:#fafafa">NET PNL (%)</div>
<div class="t" style="left:720.4px;top:512px;font-size:20px;line-height:32px;letter-spacing:0.1px;color:#fafafa">0.000%</div>
<div class="abs" style="left:908.8px;top:450px;width:187px;height:137px;background:#31313b;border-radius:12px;box-shadow:0 2px 1px -1px rgba(0,0,0,.3),0 1px 1px 0 rgba(0,0,0,.2),0 1px 3px 0 rgba(0,0,0,.15)"></div>
<div class="abs" style="left:908.8px;top:534px;width:187px;height:1px;background:rgba(250,250,250,0.15)"></div>
<svg class="abs" style="left:927px;top:465px;overflow:visible" width="22" height="22" viewBox="0 0 22 22" preserveAspectRatio="none"><path d="M12.4 2.2L18.8 9L8.2 19.9L2 12.5Z" fill="#000" stroke="#000" stroke-width="2.6" stroke-linejoin="round"/><path d="M1.2 3.2C3.5 2.8 6 3 7.5 4.2L17.6 17C17.8 18.2 17.6 19.2 17 19.8C15.5 18 13 15 10.5 12L4.5 6.2C3.5 5 2.4 4 1.2 3.2Z" fill="#000" stroke="#000" stroke-width="2.4" stroke-linejoin="round"/><path d="M12.4 3.4L17.6 9L8.2 18.7L3.2 12.5Z" fill="#d9ec3a"/><path d="M12.5 4.8L16 8.5L12.7 11.8L9.2 8Z M8.3 9.1L11.7 12.7L8.3 16L5 12.5Z" fill="#eef29a" stroke="#7d7d66" stroke-width="0.7" stroke-dasharray="0.8 0.5"/><circle cx="12.6" cy="8.2" r="0.8" fill="#8bc34a"/><circle cx="8.3" cy="12.6" r="0.8" fill="#8bc34a"/><path d="M1.8 3.6C3.8 3.4 5.6 3.6 6.8 4.6L16.8 17.2C17 17.8 16.9 18.4 16.6 18.9C15.2 17.3 12.8 14.5 10.5 11.8L4.8 6C3.9 5 2.9 4.2 1.8 3.6Z" fill="#fff"/></svg>
<div class="t" style="left:954.3px;top:460px;font-size:20px;line-height:32px;letter-spacing:0.1px;color:#fafafa">Volume</div>
<div class="t" style="left:923.8px;top:491px;font-size:20px;line-height:32px;letter-spacing:0.1px;color:#fafafa">Traded</div>
<div class="t" style="left:923.8px;top:544px;font-size:20px;line-height:32px;letter-spacing:0.1px;color:#fafafa">$ 0.00</div>
<div class="abs" style="left:1112.2px;top:450px;width:187px;height:137px;background:#31313b;border-radius:12px;box-shadow:0 2px 1px -1px rgba(0,0,0,.3),0 1px 1px 0 rgba(0,0,0,.2),0 1px 3px 0 rgba(0,0,0,.15)"></div>
<div class="abs" style="left:1112.2px;top:534px;width:187px;height:1px;background:rgba(250,250,250,0.15)"></div>
<svg class="abs" style="left:1130px;top:465px;overflow:visible" width="22" height="22" viewBox="0 0 22 22" preserveAspectRatio="none"><path d="M0.6 2.6H4.2C6 1.6 9 1.6 11 3.2C13 1.6 16 1.6 17.8 2.6H21.4V17.8H13C12.2 19 11.4 19.4 11 19.6C10.6 19.4 9.8 19 9 17.8H0.6Z" fill="#000"/><path d="M1.7 3.6H18.8V16.6H12.4L11 17.8L9.6 16.6H1.7Z" fill="#3a8ee6"/><path d="M2.7 3.4C5 2.4 8.6 2.6 11 4.6V16.8C8.6 15.4 5 15.2 2.7 15.9Z" fill="#f2f2f2"/><path d="M19.3 3.4C17 2.4 13.4 2.6 11 4.6V16.8C13.4 15.4 17 15.2 19.3 15.9Z" fill="#fff"/></svg>
<div class="t" style="left:1160.0px;top:460px;font-size:20px;line-height:32px;letter-spacing:0.1px;color:#fafafa">Liquidity</div>
<div class="t" style="left:1127.2px;top:491px;font-size:20px;line-height:32px;letter-spacing:0.1px;color:#fafafa">Placed</div>
<div class="t" style="left:1127.2px;top:544px;font-size:20px;line-height:32px;letter-spacing:0.1px;color:#fafafa">$ 0.00</div>
<div class="abs" style="left:1315.6px;top:450px;width:187px;height:137px;background:#31313b;border-radius:12px;box-shadow:0 2px 1px -1px rgba(0,0,0,.3),0 1px 1px 0 rgba(0,0,0,.2),0 1px 3px 0 rgba(0,0,0,.15)"></div>
<div class="abs" style="left:1315.6px;top:534px;width:187px;height:1px;background:rgba(250,250,250,0.15)"></div>
<svg class="abs" style="left:1334px;top:465px;overflow:visible" width="22" height="22" viewBox="0 0 22 22" preserveAspectRatio="none"><rect x="0" y="0" width="21" height="21" rx="1" fill="#000"/><rect x="1.1" y="1.1" width="18.8" height="18.8" fill="#16c60c"/><path d="M1.2 16.6L4.6 13.2L7.7 16.2L19.8 4.3" stroke="#fff" stroke-width="1.4" fill="none"/><path d="M3.4 3.8L5 5.6L6.6 3.8M5 5.6v2.6M3.7 6.5h2.6M3.7 7.6h2.6" stroke="#b9ecb3" stroke-width="0.9" fill="none"/></svg>
<div class="t" style="left:1362.3999999999999px;top:460px;font-size:20px;line-height:32px;letter-spacing:0.1px;color:#fafafa">Unrealized</div>
<div class="t" style="left:1330.6px;top:491px;font-size:20px;line-height:32px;letter-spacing:0.1px;color:#fafafa">PNL</div>
<div class="t" style="left:1330.6px;top:544px;font-size:20px;line-height:32px;letter-spacing:0.1px;color:#fafafa">$ 0.00</div>
<div class="abs" style="left:1519.0px;top:450px;width:187px;height:105px;background:#31313b;border-radius:12px;box-shadow:0 2px 1px -1px rgba(0,0,0,.3),0 1px 1px 0 rgba(0,0,0,.2),0 1px 3px 0 rgba(0,0,0,.15)"></div>
<div class="abs" style="left:1519.0px;top:502px;width:187px;height:1px;background:rgba(250,250,250,0.15)"></div>
<svg class="abs" style="left:1537px;top:465px;overflow:visible" width="22" height="22" viewBox="0 0 22 22" preserveAspectRatio="none"><rect x="0" y="0" width="21" height="21" rx="1" fill="#000"/><rect x="1.1" y="1.1" width="18.8" height="18.6" fill="#f2f2f2"/><path d="M7.3 1.1v18.6M13.6 1.1v18.6" stroke="#dcdcdc" stroke-width="0.6"/><rect x="2.3" y="6.8" width="3.2" height="12.9" rx="0.8" fill="#16c60c"/><rect x="8.9" y="10.6" width="3.1" height="9.1" fill="#f03a17"/><rect x="15.1" y="4.2" width="2.9" height="15.5" rx="0.8" fill="#0078d7"/></svg>
<div class="t" style="left:1565.8px;top:460px;font-size:20px;line-height:32px;letter-spacing:0.1px;color:#fafafa">Imbalance</div>
<div class="t" style="left:1534.0px;top:512px;font-size:20px;line-height:32px;letter-spacing:0.1px;color:#fafafa">$ 0.00</div>
<div class="abs" style="left:502px;top:607px;width:1102px;height:146px;background:#31313b;border-radius:12px;box-shadow:0 2px 1px -1px rgba(0,0,0,.3),0 1px 1px 0 rgba(0,0,0,.2),0 1px 3px 0 rgba(0,0,0,.15)"></div>
<svg class="abs" style="left:520px;top:622px;overflow:visible" width="22" height="22" viewBox="0 0 22 22" preserveAspectRatio="none"><g stroke="#000" stroke-width="2" stroke-linejoin="round"><path d="M21.2 0.8C17 1.3 14 3 11.6 5.4L6.8 4.6L1.6 9.5L5.6 11L4.4 13.2L2 17.5L0.8 21.2L4.5 20L8.8 17.6L11 16.4L12.6 20.4L17.4 15.2L16.6 10.4C19 8 20.7 5 21.2 0.8Z" fill="#000"/></g><path d="M2.6 9.8L6.8 5.5L11.2 6.2L7 12.2Z" fill="#00b4f0"/><path d="M12.2 19.4L16.5 15.2L15.8 10.8L9.8 15Z" fill="#00b4f0"/><path d="M4.2 14.2L7.8 17.8L11.4 15.6L15.2 12C18.2 9 20 5 20.6 1.4C17 2 13 3.8 10 6.8L6.4 10.6Z" fill="#fff"/><path d="M16.2 2.3C18 1.7 19.5 1.4 20.6 1.4C20.4 2.6 20.1 4 19.7 5.8Z" fill="#e81123"/><path d="M4.2 14.2L7.8 17.8L6.2 19.2L2.8 15.8Z" fill="#454f56"/><path d="M2.8 15.8L6.2 19.2L1.5 20.6Z" fill="#ff8c1a"/><circle cx="3.6" cy="18.2" r="1" fill="#ffd23a"/><circle cx="13.8" cy="8.2" r="1.6" fill="#bdbdbd"/><path d="M8 14.4L10.2 12.2" stroke="#35b8ef" stroke-width="0.9"/></svg>
<div class="t" style="left:549px;top:619px;font-size:20px;line-height:28px;letter-spacing:0.13px;color:#fafafa">Active Controllers</div>
<div class="abs" style="left:502px;top:659px;width:1102px;height:1px;background:rgba(250,250,250,0.12)"></div>
<div class="abs" style="left:502px;top:659px;width:1103px;height:94px;border:1px solid rgba(250,250,250,0.15);border-radius:4px 4px 6px 6px;overflow:hidden">
<div class="abs" style="left:0;top:40px;width:1102px;height:1px;background:rgba(250,250,250,0.15)"></div>
<div class="abs" style="left:0;top:76px;width:1102px;height:18px;background:#f1f1f1"></div>
<div class="abs" style="left:17px;top:78px;width:725px;height:13px;background:#c1c1c1"></div>
<svg class="abs" style="left:4px;top:80px" width="8" height="10"><path d="M6 1L2 5L6 9z" fill="#a3a3a3"/></svg>
<svg class="abs" style="left:1090px;top:80px" width="8" height="10"><path d="M2 1L6 5L2 9z" fill="#505050"/></svg>
</div>
<div class="abs" style="left:519px;top:672px;width:18px;height:18px;border:2px solid rgba(250,250,250,0.7);border-radius:2px"></div>
<div class="abs" style="left:519px;top:709px;width:18px;height:18px;border:2px solid rgba(250,250,250,0.7);border-radius:2px"></div>
<div class="abs" style="left:553px;top:674px;width:1px;height:14px;background:rgba(250,250,230,0.22)"></div>
<div class="abs" style="left:713px;top:674px;width:1px;height:14px;background:rgba(250,250,230,0.22)"></div>
<div class="abs" style="left:823px;top:674px;width:1px;height:14px;background:rgba(250,250,230,0.22)"></div>
<div class="abs" style="left:933px;top:674px;width:1px;height:14px;background:rgba(250,250,230,0.22)"></div>
<div class="abs" style="left:1043px;top:674px;width:1px;height:14px;background:rgba(250,250,230,0.22)"></div>
<div class="abs" style="left:1183px;top:674px;width:1px;height:14px;background:rgba(250,250,230,0.22)"></div>
<div class="abs" style="left:1323px;top:674px;width:1px;height:14px;background:rgba(250,250,230,0.22)"></div>
<div class="abs" style="left:1463px;top:674px;width:1px;height:14px;background:rgba(250,250,230,0.22)"></div>
<div class="abs" style="left:1573px;top:674px;width:1px;height:14px;background:rgba(250,250,230,0.22)"></div>
<div class="abs" style="left:503px;top:660px;width:1101px;height:76px;overflow:hidden">
<div class="t" style="left:60px;top:11px;font-size:14px;line-height:18px;letter-spacing:0.12px;color:#fafafa;font-weight:500">ID</div>
<div class="t" style="left:60px;top:49px;font-size:14px;line-height:18px;letter-spacing:0.12px;color:#fafafa">code-nebula_0.1</div>
<div class="t" style="left:220px;top:11px;font-size:14px;line-height:18px;letter-spacing:0.12px;color:#fafafa;font-weight:500">Controller</div>
<div class="t" style="left:220px;top:49px;font-size:14px;line-height:18px;letter-spacing:0.12px;color:#fafafa">pmm_simple</div>
<div class="t" style="left:330px;top:11px;font-size:14px;line-height:18px;letter-spacing:0.12px;color:#fafafa;font-weight:500">Connector</div>
<div class="t" style="left:330px;top:49px;font-size:14px;line-height:18px;letter-spacing:0.12px;color:#fafafa">kucoin</div>
<div class="t" style="left:440px;top:11px;font-size:14px;line-height:18px;letter-spacing:0.12px;color:#fafafa;font-weight:500">Trading Pair</div>
<div class="t" style="left:440px;top:49px;font-size:14px;line-height:18px;letter-spacing:0.12px;color:#fafafa">WLD-USDT</div>
<div class="t" style="left:550px;top:11px;font-size:14px;line-height:18px;letter-spacing:0.12px;color:#fafafa;font-weight:500">Realized PNL ($)</div>
<div class="t" style="left:550px;top:49px;font-size:14px;line-height:18px;letter-spacing:0.12px;color:#fafafa">0</div>
<div class="t" style="left:690px;top:11px;font-size:14px;line-height:18px;letter-spacing:0.12px;color:#fafafa;font-weight:500">Unrealized PNL ($)</div>
<div class="t" style="left:690px;top:49px;font-size:14px;line-height:18px;letter-spacing:0.12px;color:#fafafa">0</div>
<div class="t" style="left:830px;top:11px;font-size:14px;line-height:18px;letter-spacing:0.12px;color:#fafafa;font-weight:500">NET PNL ($)</div>
<div class="t" style="left:830px;top:49px;font-size:14px;line-height:18px;letter-spacing:0.12px;color:#fafafa">0</div>
<div class="t" style="left:970px;top:11px;font-size:14px;line-height:18px;letter-spacing:0.12px;color:#fafafa;font-weight:500">Volume ($)</div>
<div class="t" style="left:970px;top:49px;font-size:14px;line-height:18px;letter-spacing:0.12px;color:#fafafa">0</div>
<div class="t" style="left:1080px;top:11px;font-size:14px;line-height:18px;letter-spacing:0.12px;color:#fafafa;font-weight:500">Liquidity</div>
<div class="t" style="left:1080px;top:49px;font-size:14px;line-height:18px;letter-spacing:0.12px;color:#fafafa">0</div>
</div>
<div class="abs" style="left:1613px;top:607px;width:93px;height:147px;border:1px solid rgba(255,167,38,0.55);border-radius:4px"></div>
<svg class="abs" style="left:1628px;top:671px" width="20" height="20" viewBox="0 0 20 20"><circle cx="10" cy="10" r="8.9" stroke="#ffa726" stroke-width="2" fill="none"/><path d="M10 5.2v9.6M5.2 10h9.6" stroke="#ffa726" stroke-width="2"/></svg>
<div class="t" style="left:1649px;top:671px;font-size:16px;line-height:20px;color:#ffa726">STOP</div>
<div class="abs" style="left:487px;top:763px;width:1234px;height:137px;background:#31313b;border-radius:0 0 4px 4px;box-shadow:0 2px 1px -1px rgba(0,0,0,.2),0 1px 1px 0 rgba(0,0,0,.14),0 1px 3px 0 rgba(0,0,0,.12)"></div>
<div class="abs" style="left:487px;top:763px;width:1234px;height:1px;background:rgba(250,250,250,0.15)"></div>
<div class="abs" style="left:487px;top:831px;width:1234px;height:1px;background:rgba(250,250,250,0.15)"></div>
<div class="t" style="left:518px;top:787px;font-size:16px;line-height:20px;letter-spacing:0.12px;color:#fafafa">Error Logs</div>
<div class="t" style="left:518px;top:855px;font-size:16px;line-height:20px;letter-spacing:0.12px;color:#fafafa">General Logs</div>
<svg class="abs" style="left:1725px;top:970px" width="10" height="10"><path d="M8 2v6H2" stroke="#111" stroke-width="1.5" fill="none"/></svg>
</body></html>
